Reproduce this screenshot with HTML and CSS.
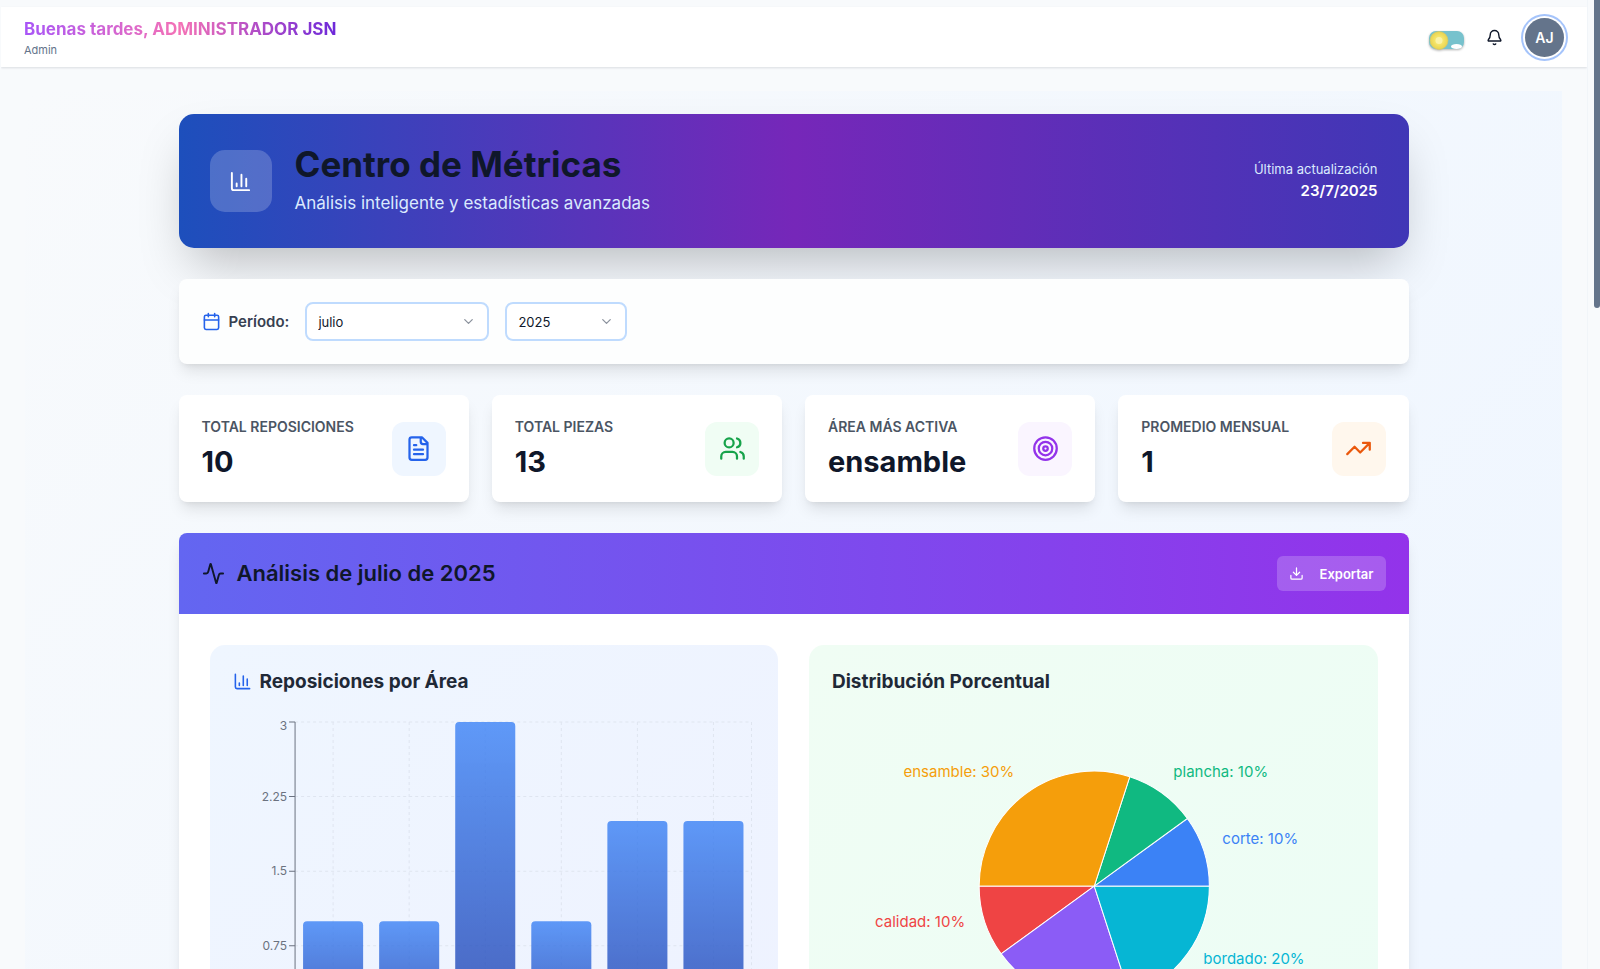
FILE: index.html
```html
<!DOCTYPE html>
<html lang="es">
<head>
<meta charset="utf-8">
<title>Centro de Métricas</title>
<link rel="stylesheet" href="styles.css">
</head>
<body>
<svg class="defs" width="0" height="0" aria-hidden="true">
  <defs>
    <symbol id="i-chart" viewBox="0 0 24 24"><path d="M3 3v16a2 2 0 0 0 2 2h16M18 17V9M13 17V5M8 17v-3"/></symbol>
    <symbol id="i-calendar" viewBox="0 0 24 24"><path d="M8 2v4M16 2v4M3 10h18"/><rect x="3" y="4" width="18" height="18" rx="2"/></symbol>
    <symbol id="i-file" viewBox="0 0 24 24"><path d="M15 2H6a2 2 0 0 0-2 2v16a2 2 0 0 0 2 2h12a2 2 0 0 0 2-2V7ZM14 2v4a2 2 0 0 0 2 2h4M10 9H8M16 13H8M16 17H8"/></symbol>
    <symbol id="i-users" viewBox="0 0 24 24"><path d="M16 21v-2a4 4 0 0 0-4-4H6a4 4 0 0 0-4 4v2M22 21v-2a4 4 0 0 0-3-3.87M16 3.13a4 4 0 0 1 0 7.75"/><circle cx="9" cy="7" r="4"/></symbol>
    <symbol id="i-target" viewBox="0 0 24 24"><circle cx="12" cy="12" r="10"/><circle cx="12" cy="12" r="6"/><circle cx="12" cy="12" r="2"/></symbol>
    <symbol id="i-trend" viewBox="0 0 24 24"><path d="M22 7l-8.5 8.5-5-5L2 17M16 7h6v6"/></symbol>
    <symbol id="i-activity" viewBox="0 0 24 24"><path d="M22 12h-2.48a2 2 0 0 0-1.93 1.46l-2.35 8.36a.25.25 0 0 1-.48 0L9.24 2.18a.25.25 0 0 0-.48 0l-2.35 8.36A2 2 0 0 1 4.49 12H2"/></symbol>
    <symbol id="i-download" viewBox="0 0 24 24"><path d="M21 15v4a2 2 0 0 1-2 2H5a2 2 0 0 1-2-2v-4M7 10l5 5 5-5M12 15V3"/></symbol>
    <symbol id="i-bell" viewBox="0 0 24 24"><path d="M10.27 21a2 2 0 0 0 3.46 0M3.26 15.33A1 1 0 0 0 4 17h16a1 1 0 0 0 .74-1.67C19.41 13.96 18 12.5 18 8A6 6 0 0 0 6 8c0 4.5-1.41 5.96-2.74 7.33"/></symbol>
    <symbol id="i-down" viewBox="0 0 24 24"><path d="M6 9l6 6 6-6"/></symbol>
  </defs>
</svg>

<div class="shell">
  <header class="topbar">
    <div class="greeting">
      <p class="greeting-title">Buenas tardes, ADMINISTRADOR JSN</p>
      <p class="greeting-role">Admin</p>
    </div>
    <div class="actions">
      <label class="theme">
        <input type="checkbox" class="theme-input" aria-label="Cambiar tema">
        <svg class="theme-art" viewBox="0 0 35 20" aria-hidden="true">
          <defs><radialGradient id="sun"><stop offset="0" stop-color="#f8ee96"/><stop offset=".45" stop-color="#f5e56b"/><stop offset="1" stop-color="#e9d34f"/></radialGradient></defs>
          <rect x="0" y="0" width="35" height="18" rx="7" fill="#77c2cd"/>
          <ellipse cx="27.500" cy="15.500" rx="5.500" ry="2.500" fill="#fff"/>
          <circle cx="10" cy="9.500" r="9" fill="url(#sun)" stroke="#d8c765" stroke-width=".6"/>
          <circle cx="10" cy="9.500" r="3.500" fill="#faf3a8"/>
        </svg>
      </label>
      <button class="bell" type="button" aria-label="Notificaciones"><svg class="icon icon-17"><use href="#i-bell"/></svg></button>
      <button class="avatar" type="button">AJ</button>
    </div>
  </header>

  <main class="page">
    <div class="content">
      <section class="hero">
        <div class="hero-icon"><svg class="icon icon-23"><use href="#i-chart"/></svg></div>
        <div class="hero-text">
          <h1>Centro de Métricas</h1>
          <p>Análisis inteligente y estadísticas avanzadas</p>
        </div>
        <div class="hero-date">
          <p>Última actualización</p>
          <strong>23/7/2025</strong>
        </div>
      </section>

      <section class="card filter">
        <label class="filter-label" for="month"><svg class="icon icon-19 blue"><use href="#i-calendar"/></svg>Período:</label>
        <div class="picker picker-month">
          <select id="month"><option>julio</option></select>
          <svg class="icon icon-15"><use href="#i-down"/></svg>
        </div>
        <div class="picker picker-year">
          <select aria-label="Año"><option>2025</option></select>
          <svg class="icon icon-15"><use href="#i-down"/></svg>
        </div>
      </section>

      <section class="stats">
        <article class="card stat">
          <div><h2>Total Reposiciones</h2><p>10</p></div>
          <div class="badge badge-blue"><svg class="icon icon-27"><use href="#i-file"/></svg></div>
        </article>
        <article class="card stat">
          <div><h2>Total Piezas</h2><p>13</p></div>
          <div class="badge badge-green"><svg class="icon icon-27"><use href="#i-users"/></svg></div>
        </article>
        <article class="card stat">
          <div><h2>Área más activa</h2><p>ensamble</p></div>
          <div class="badge badge-purple"><svg class="icon icon-27"><use href="#i-target"/></svg></div>
        </article>
        <article class="card stat">
          <div><h2>Promedio mensual</h2><p>1</p></div>
          <div class="badge badge-orange"><svg class="icon icon-27"><use href="#i-trend"/></svg></div>
        </article>
      </section>

      <section class="card analysis">
        <div class="analysis-head">
          <h2><svg class="icon icon-23"><use href="#i-activity"/></svg>Análisis de julio de 2025</h2>
          <button class="export" type="button"><svg class="icon icon-15"><use href="#i-download"/></svg>Exportar</button>
        </div>
        <div class="charts">
          <section class="panel panel-blue">
            <h3><svg class="icon icon-19 blue"><use href="#i-chart"/></svg>Reposiciones por Área</h3>
            <svg class="chart" viewBox="0 0 522 384" role="img" aria-label="Reposiciones por Área">
              <defs><linearGradient id="bar" x1="0" y1="0" x2="0" y2="1"><stop offset="0" stop-color="#3b82f6"/><stop offset="1" stop-color="#1e40af"/></linearGradient></defs>
              <g class="grid">
                <path d="M62 5H518M62 79.500H518M62 154H518M62 228.500H518M62 303H518"/>
                <path d="M100 5V303M176 5V303M252 5V303M328 5V303M404 5V303M480 5V303M518 5V303"/>
              </g>
              <g class="axis">
                <path d="M62 5V303M56 5H62M56 79.500H62M56 154H62M56 228.500H62M56 303H518"/>
              </g>
              <g class="ticks">
                <text x="54" y="13">3</text>
                <text x="54" y="84">2.25</text>
                <text x="54" y="158">1.5</text>
                <text x="54" y="233">0.75</text>
              </g>
              <g fill="url(#bar)" opacity=".8">
                <path d="M70 303V208a4 4 0 0 1 4-4h52a4 4 0 0 1 4 4v95z"/>
                <path d="M146 303V208a4 4 0 0 1 4-4h52a4 4 0 0 1 4 4v95z"/>
                <path d="M222 303V9a4 4 0 0 1 4-4h52a4 4 0 0 1 4 4v294z"/>
                <path d="M298 303V208a4 4 0 0 1 4-4h52a4 4 0 0 1 4 4v95z"/>
                <path d="M374 303V108a4 4 0 0 1 4-4h52a4 4 0 0 1 4 4v195z"/>
                <path d="M450 303V108a4 4 0 0 1 4-4h52a4 4 0 0 1 4 4v195z"/>
              </g>
            </svg>
          </section>
          <section class="panel panel-green">
            <h3>Distribución Porcentual</h3>
            <svg class="chart" viewBox="0 0 522 384" role="img" aria-label="Distribución Porcentual">
              <g transform="translate(262 169)" stroke="#fff" stroke-width="1">
                <path fill="#3b82f6" d="M0 0L115 0A115 115 0 0 0 93.040 -67.600Z"/>
                <path fill="#10b981" d="M0 0L93.040 -67.600A115 115 0 0 0 35.540 -109.370Z"/>
                <path fill="#f59e0b" d="M0 0L35.540 -109.370A115 115 0 0 0 -115 0Z"/>
                <path fill="#ef4444" d="M0 0L-115 0A115 115 0 0 0 -93.040 67.600Z"/>
                <path fill="#8b5cf6" d="M0 0L-93.040 67.600A115 115 0 0 0 35.540 109.370Z"/>
                <path fill="#06b6d4" d="M0 0L35.540 109.370A115 115 0 0 0 115 0Z"/>
              </g>
              <g class="slices">
                <text x="182" y="60" text-anchor="end" fill="#f59e0b">ensamble: 30%</text>
                <text x="341" y="60" fill="#10b981">plancha: 10%</text>
                <text x="390" y="127" fill="#3b82f6">corte: 10%</text>
                <text x="133" y="210" text-anchor="end" fill="#ef4444">calidad: 10%</text>
                <text x="371" y="247" fill="#06b6d4">bordado: 20%</text>
              </g>
            </svg>
          </section>
        </div>
      </section>
    </div>
  </main>
</div>
<div class="scroll-thumb"></div>
</body>
</html>
```

FILE: styles.css
```css
* { box-sizing: border-box; margin: 0; }
html, body { height: 100%; }
body {
  overflow: hidden;
  background: #f8fafc;
  color: #0f172a;
  font-family: Inter, "Liberation Sans", sans-serif;
  font-size: 15px;
}
button, select { font: inherit; color: inherit; }
.defs { position: absolute; }
.shell {
  height: 100%;
  overflow-y: auto;
  scrollbar-width: none;
  margin: 0 12px 0 1px;
  padding-top: 7px;
  border-right: 1px solid #f1f5f9;
}
.scroll-thumb {
  position: fixed;
  top: 0;
  right: 0;
  width: 6px;
  height: 308px;
  background: #64748b;
  border-radius: 0 0 3px 3px;
}
.icon {
  display: block;
  flex: none;
  fill: none;
  stroke: currentColor;
  stroke-width: 2;
  stroke-linecap: round;
  stroke-linejoin: round;
}
.icon-15 { width: 15px; height: 15px; }
.icon-17 { width: 17px; height: 17px; }
.icon-19 { width: 19px; height: 19px; }
.icon-23 { width: 23px; height: 23px; }
.icon-27 { width: 27px; height: 27px; }
.blue { color: #2563eb; }

/* Top bar */
.topbar {
  display: flex;
  align-items: center;
  justify-content: space-between;
  height: 60px;
  padding: 0 23px;
  background: #fff;
  box-shadow: 0 1px 2px rgba(15, 23, 42, .12);
}
.greeting-title {
  width: max-content;
  font-size: 17px;
  line-height: 26px;
  font-weight: 700;
  background: linear-gradient(90deg, #a855f7, #f472b6 50%, #6d28d9);
  background-clip: text;
  -webkit-background-clip: text;
  color: transparent;
}
.greeting-role { font-size: 11px; line-height: 16px; color: #64748b; }
.actions { display: flex; align-items: center; gap: 22px; }
.theme { display: block; padding-top: 8px; }
.theme-input { position: absolute; opacity: 0; }
.theme-art {
  display: block;
  width: 35px;
  height: 20px;
  filter: drop-shadow(0 1px 1px rgba(0, 0, 0, .3));
}
.bell { padding: 0; border: 0; background: none; }
.avatar {
  width: 39px;
  height: 39px;
  padding: 0;
  border: 0;
  border-radius: 50%;
  background: #64748b;
  color: #fff;
  font-size: 14px;
  font-weight: 600;
  box-shadow: 0 0 0 2px #fff, 0 0 0 4px #a5c4fb;
}

/* Page */
.page {
  margin: 24px 25px 0 24px;
  padding: 23px;
  background: linear-gradient(135deg, #f8fafc 0%, #eff6ff 50%, #eef2ff 100%) 0 0 / 100% 2900px no-repeat;
}
.content {
  display: flex;
  flex-direction: column;
  gap: 31px;
  max-width: 1230px;
  margin: 0 auto;
}
.card {
  background: #fff;
  border-radius: 8px;
  box-shadow: 0 10px 15px -3px rgba(0, 0, 0, .1), 0 4px 6px -4px rgba(0, 0, 0, .1);
}
.hero {
  display: flex;
  align-items: center;
  gap: 23px;
  padding: 31px;
  border-radius: 15px;
  background: linear-gradient(90deg, #1d4fbc, #7627b9 50%, #4037b6);
  box-shadow: 0 25px 50px -12px rgba(0, 0, 0, .25);
}
.hero-icon {
  display: grid;
  place-items: center;
  width: 62px;
  height: 62px;
  border-radius: 15px;
  background: rgba(255, 255, 255, .2);
  color: #fff;
}
.hero-text { flex: 1; }
.hero h1 { font-size: 35px; line-height: 38px; font-weight: 700; margin-bottom: 7px; }
.hero-text p { font-size: 17px; line-height: 27px; color: #dbeafe; }
.hero-date { text-align: right; color: #fff; }
.hero-date p { font-size: 13px; line-height: 19px; color: #dbeafe; }
.hero-date strong { display: block; font-size: 15px; line-height: 23px; font-weight: 600; }

.filter { display: flex; align-items: center; gap: 16px; padding: 23px; background: #fdfefe; }
.filter-label { display: flex; align-items: center; gap: 8px; font-weight: 600; color: #374151; }
.picker { position: relative; }
.picker-month { width: 184px; }
.picker-year { width: 122px; }
.picker select {
  appearance: none;
  width: 100%;
  height: 39px;
  padding: 0 11px;
  border: 2px solid #bfdbfe;
  border-radius: 8px;
  background: #fff;
  font-size: 13px;
}
.picker .icon { position: absolute; right: 13px; top: 12px; color: #8b929d; }

.stats { display: grid; grid-template-columns: repeat(4, 1fr); gap: 23px; }
.stat { display: flex; align-items: center; justify-content: space-between; padding: 23px; }
.stat h2 {
  font-size: 14px;
  line-height: 18px;
  font-weight: 600;
  text-transform: uppercase;
  color: #4b5563;
  margin-bottom: 8px;
}
.stat p { font-size: 29px; line-height: 35px; font-weight: 700; }
.badge { display: grid; place-items: center; width: 54px; height: 54px; border-radius: 12px; }
.badge-blue { background: #eff6ff; color: #2563eb; }
.badge-green { background: #f0fdf4; color: #16a34a; }
.badge-purple { background: #faf5ff; color: #9333ea; }
.badge-orange { background: #fff7ed; color: #ea580c; }

/* Analysis */
.analysis { overflow: hidden; }
.analysis-head {
  display: flex;
  align-items: center;
  justify-content: space-between;
  padding: 23px;
  background: linear-gradient(90deg, #6366f1, #9333ea);
}
.analysis-head h2 {
  display: flex;
  align-items: center;
  gap: 12px;
  font-size: 22px;
  line-height: 31px;
  font-weight: 600;
}
.export {
  display: flex;
  align-items: center;
  gap: 16px;
  height: 35px;
  padding: 0 12px;
  border: 0;
  border-radius: 6px;
  background: rgba(255, 255, 255, .2);
  color: #fff;
  font-size: 13px;
  font-weight: 600;
}
.charts { display: grid; grid-template-columns: 1fr 1fr; gap: 31px; padding: 31px; }
.panel { padding: 23px; border-radius: 15px; }
.panel-blue { background: linear-gradient(135deg, #eff6ff, #eef2ff); }
.panel-green { background: linear-gradient(135deg, #f0fdf4, #ecfdf5); }
.panel h3 {
  display: flex;
  align-items: center;
  gap: 8px;
  margin-bottom: 22px;
  font-size: 19px;
  line-height: 27px;
  font-weight: 700;
  color: #1f2937;
}
.chart { display: block; width: 100%; height: auto; }
.grid { fill: none; stroke: #dfe5f0; stroke-dasharray: 3 3; }
.axis { fill: none; stroke: #6b7280; }
.ticks { font-size: 12px; text-anchor: end; fill: #6b7280; }
.slices { font-size: 15px; }
```
